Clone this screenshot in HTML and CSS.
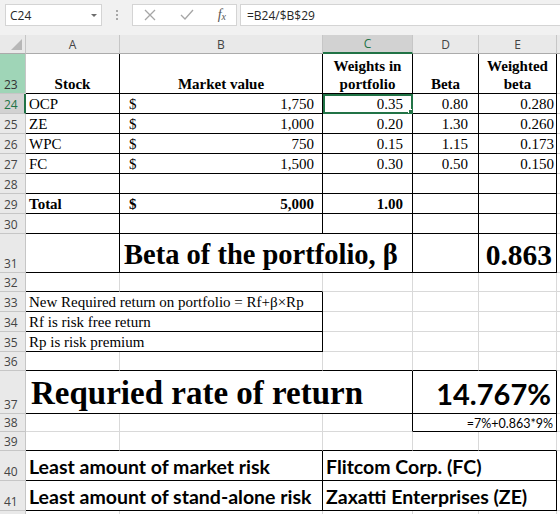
FILE: index.html
```html
<!DOCTYPE html>
<html lang="en">
<head>
    <meta charset="UTF-8">
    <meta name="viewport" content="width=device-width, initial-scale=1.0">
    <title>Portfolio beta</title>
    <link rel="stylesheet" href="styles.css">
</head>
<body>
    <div class="ribbon">
        <div class="namebox"><span>C24</span><span class="caret"></span></div>
        <div class="grip"><i></i><i></i><i></i></div>
        <div class="fbtns">
            <svg width="14" height="14" viewBox="0 0 14 14"><path d="M2 2 L12 12 M12 2 L2 12" stroke="#a6a6a6" stroke-width="1.3" fill="none"/></svg>
            <svg width="16" height="14" viewBox="0 0 16 14"><path d="M2 7 L6 11 L14 2" stroke="#a6a6a6" stroke-width="1.3" fill="none"/></svg>
            <span class="fx">f<sub>x</sub></span>
        </div>
        <div class="finput">=B24/$B$29</div>
    </div>

    <table class="sheet">
        <colgroup>
            <col class="w-hdr"><col class="w-a"><col class="w-b"><col class="w-c"><col class="w-d"><col class="w-e"><col class="w-f">
        </colgroup>
        <tr class="h-head">
            <th class="corner"><span class="tri"></span></th>
            <th>A</th><th>B</th><th class="on">C</th><th>D</th><th>E</th><th></th>
        </tr>
        <tr class="h-40">
            <th class="rn mint">23</th>
            <td class="r b hd center">Stock</td>
            <td class="r b hd center">Market value</td>
            <td class="r b hd center wrap">Weights in portfolio</td>
            <td class="r b hd center">Beta</td>
            <td class="r b hd center wrap">Weighted beta</td>
            <td></td>
        </tr>
        <tr class="h-20">
            <th class="rn on">24</th>
            <td class="r b">OCP</td>
            <td class="r b"><div class="acct"><span>$</span><span>1,750</span></div></td>
            <td class="r b num sel">0.35<span class="handle"></span></td>
            <td class="r b num pd">0.80</td>
            <td class="r b num">0.280</td>
            <td></td>
        </tr>
        <tr class="h-20">
            <th class="rn">25</th>
            <td class="r b">ZE</td>
            <td class="r b"><div class="acct"><span>$</span><span>1,000</span></div></td>
            <td class="r b num">0.20</td>
            <td class="r b num pd">1.30</td>
            <td class="r b num">0.260</td>
            <td></td>
        </tr>
        <tr class="h-20">
            <th class="rn">26</th>
            <td class="r b">WPC</td>
            <td class="r b"><div class="acct"><span>$</span><span>750</span></div></td>
            <td class="r b num">0.15</td>
            <td class="r b num pd">1.15</td>
            <td class="r b num">0.173</td>
            <td></td>
        </tr>
        <tr class="h-20">
            <th class="rn">27</th>
            <td class="r b">FC</td>
            <td class="r b"><div class="acct"><span>$</span><span>1,500</span></div></td>
            <td class="r b num">0.30</td>
            <td class="r b num pd">0.50</td>
            <td class="r b num">0.150</td>
            <td></td>
        </tr>
        <tr class="h-20">
            <th class="rn">28</th>
            <td class="r b"></td><td class="r b"></td><td class="r b"></td><td class="r b"></td><td class="r b"></td>
            <td></td>
        </tr>
        <tr class="h-20">
            <th class="rn">29</th>
            <td class="r b hd">Total</td>
            <td class="r b hd"><div class="acct"><span>$</span><span>5,000</span></div></td>
            <td class="r b hd num">1.00</td>
            <td class="r b"></td>
            <td class="r b"></td>
            <td></td>
        </tr>
        <tr class="h-20">
            <th class="rn">30</th>
            <td class="r b"></td><td class="r b"></td><td class="r b"></td><td class="r b"></td><td class="r b"></td>
            <td></td>
        </tr>
        <tr class="h-39">
            <th class="rn">31</th>
            <td class="r b"></td>
            <td class="r b big" colspan="2">Beta of the portfolio, β</td>
            <td class="r b"></td>
            <td class="r b big num">0.863</td>
            <td></td>
        </tr>
        <tr class="h-19">
            <th class="rn">32</th>
            <td class="b"></td><td class="b"></td><td></td><td></td><td></td><td></td>
        </tr>
        <tr class="h-20">
            <th class="rn">33</th>
            <td class="r b" colspan="2">New Required return on portfolio = Rf+β×Rp</td>
            <td></td><td></td><td></td><td></td>
        </tr>
        <tr class="h-20">
            <th class="rn">34</th>
            <td class="r b" colspan="2">Rf is risk free return</td>
            <td></td><td></td><td></td><td></td>
        </tr>
        <tr class="h-20">
            <th class="rn">35</th>
            <td class="r b" colspan="2">Rp is risk premium</td>
            <td></td><td></td><td></td><td></td>
        </tr>
        <tr class="h-19">
            <th class="rn">36</th>
            <td class="b"></td><td class="b"></td><td class="b"></td><td class="b"></td><td class="b"></td><td></td>
        </tr>
        <tr class="h-43">
            <th class="rn">37</th>
            <td class="r b huge" colspan="3">Requried rate of return</td>
            <td class="r b rate" colspan="2">14.767%</td>
            <td></td>
        </tr>
        <tr class="h-18">
            <th class="rn">38</th>
            <td></td><td></td><td class="r"></td>
            <td class="r b note" colspan="2">=7%+0.863*9%</td>
            <td></td>
        </tr>
        <tr class="h-19">
            <th class="rn">39</th>
            <td class="b"></td><td class="b"></td><td class="b"></td><td class="b"></td><td class="b"></td><td></td>
        </tr>
        <tr class="h-30">
            <th class="rn">40</th>
            <td class="r b label" colspan="2">Least amount of market risk</td>
            <td class="r b label" colspan="3">Flitcom Corp. (FC)</td>
            <td></td>
        </tr>
        <tr class="h-30">
            <th class="rn">41</th>
            <td class="r b label" colspan="2">Least amount of stand-alone risk</td>
            <td class="r b label" colspan="3">Zaxatti Enterprises (ZE)</td>
            <td></td>
        </tr>
        <tr class="h-20">
            <th class="rn"></th>
            <td></td><td></td><td></td><td></td><td></td><td></td>
        </tr>
    </table>
</body>
</html>
```

FILE: styles.css
```css
body {
    margin: 0;
    overflow: hidden;
    background-color: #fff;
    font-family: "Liberation Serif", serif;
}

/* formula bar */
.ribbon {
    display: flex;
    align-items: center;
    height: 35px;
    padding: 0 0 5px 5px;
    box-sizing: border-box;
    background-color: #f1f1f1;
    font-family: "Open Sans", sans-serif;
    font-size: 12px;
    color: #262626;
}
.namebox {
    display: flex;
    align-items: center;
    justify-content: space-between;
    width: 97px;
    height: 22px;
    box-sizing: border-box;
    padding: 0 4px 0 4px;
    background-color: #fff;
    border: 1px solid #d4d4d4;
}
.caret {
    width: 0;
    height: 0;
    border-left: 3px solid transparent;
    border-right: 3px solid transparent;
    border-top: 3px solid #6d6d6d;
}
.grip {
    display: flex;
    flex-direction: column;
    gap: 2px;
    width: 30px;
    align-items: center;
}
.grip i {
    width: 2px;
    height: 2px;
    background-color: #a8a8a8;
}
.fbtns {
    display: flex;
    align-items: center;
    justify-content: space-between;
    width: 105px;
    height: 22px;
    box-sizing: border-box;
    padding: 0 10px 0 10px;
    background-color: #fff;
    border: 1px solid #d4d4d4;
}
.fx {
    font-family: "Liberation Serif", serif;
    font-style: italic;
    font-size: 14px;
    color: #555;
}
.fx sub {
    font-size: 10px;
    vertical-align: -1px;
}
.finput {
    flex: 1;
    height: 22px;
    margin-left: 3px;
    box-sizing: border-box;
    padding: 2px 6px;
    background-color: #fff;
    border: 1px solid #d4d4d4;
    border-right: none;
}

/* grid */
.sheet {
    border-collapse: separate;
    border-spacing: 0;
    table-layout: fixed;
    width: 617px;
}
.w-hdr { width: 26px; }
.w-a { width: 94px; }
.w-b { width: 203px; }
.w-c { width: 90px; }
.w-d { width: 66px; }
.w-e { width: 78px; }
.w-f { width: 60px; }

.h-head { height: 19px; }
.h-18 { height: 18px; }
.h-19 { height: 19px; }
.h-20 { height: 20px; }
.h-30 { height: 30px; }
.h-39 { height: 39px; }
.h-40 { height: 40px; }
.h-43 { height: 43px; }

th, td {
    padding: 0 3px;
    border-right: 1px solid #d9d9d9;
    border-bottom: 1px solid #d9d9d9;
    white-space: nowrap;
    overflow: hidden;
    vertical-align: bottom;
    box-sizing: border-box;
}
td {
    font-size: 15px;
    line-height: 17px;
    color: #000;
}
th {
    font-family: "Open Sans", sans-serif;
    font-weight: normal;
    font-size: 12px;
    line-height: 17px;
    color: #444;
    background-color: #e9e9e9;
    border-right-color: #c6c6c6;
    border-bottom-color: #c6c6c6;
    text-align: center;
    vertical-align: middle;
}
.h-head th {
    border-bottom-color: #ababab;
}
th.corner {
    position: relative;
}
.tri {
    position: absolute;
    right: 3px;
    bottom: 3px;
    width: 0;
    height: 0;
    border-left: 11px solid transparent;
    border-bottom: 11px solid #b7b7b7;
}
th.on {
    background-color: #d2d2d2;
    color: #217346;
}
.h-head th.on {
    border-bottom: 2px solid #217346;
}
th.rn {
    text-align: left;
    padding-left: 4px;
    vertical-align: bottom;
}
th.rn.on {
    border-right: 2px solid #217346;
}
th.mint {
    background-color: #9fd5b7;
    color: #333;
}

.r { border-right-color: #000; }
.b { border-bottom-color: #000; }

.hd { font-weight: bold; }
.center { text-align: center; }
.wrap {
    white-space: normal;
    line-height: 18px;
    padding: 0;
}
.num {
    text-align: right;
    padding-right: 9px;
}
.num.pd { padding-right: 10px; }
td:nth-child(6).num { padding-right: 2px; }

.acct {
    display: flex;
    justify-content: space-between;
    padding: 0 5px 0 6px;
}

.sel {
    position: relative;
    outline: 2px solid #217346;
    outline-offset: -2px;
}
.handle {
    position: absolute;
    right: -3px;
    bottom: -3px;
    width: 5px;
    height: 5px;
    background-color: #217346;
    border: 1px solid #fff;
}

.big {
    font-weight: bold;
    font-size: 28.5px;
    line-height: 34px;
    padding-left: 4px;
}
td.big.num {
    font-size: 29.5px;
    padding-right: 4px;
}
.huge {
    font-weight: bold;
    font-size: 33px;
    line-height: 40px;
    padding-left: 5px;
}
.rate {
    font-family: Lato, sans-serif;
    font-weight: bold;
    font-size: 29px;
    line-height: 38px;
    text-align: right;
    padding-right: 5px;
}
.note {
    font-family: Lato, sans-serif;
    font-size: 12.5px;
    line-height: 15px;
    text-align: right;
    padding-right: 3px;
}
.label {
    font-family: Lato, sans-serif;
    font-weight: bold;
    font-size: 19.5px;
    line-height: 27px;
    padding-left: 3px;
}
```
